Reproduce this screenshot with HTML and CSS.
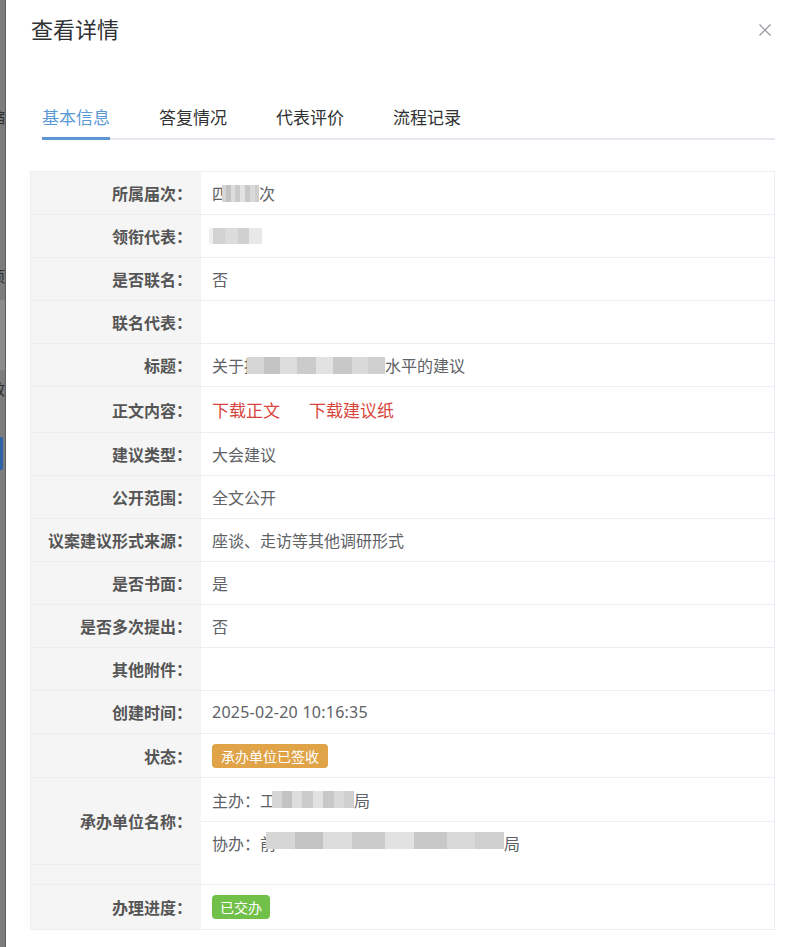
FILE: index.html
```html
<!DOCTYPE html>
<html lang="zh-CN">
<head>
<meta charset="utf-8">
<title>查看详情</title>
<link rel="stylesheet" href="styles.css">
</head>
<body>
<div class="backdrop">
  <span class="bg-glyph g1">缩</span>
  <span class="bg-glyph g2">项</span>
  <span class="bg-glyph g3">效</span>
  <span class="bg-glyph g4">效</span>
  <span class="bg-band b1"></span>
  <span class="bg-btn"></span>
</div>
<div class="modal">
  <div class="modal-header">
    <div class="modal-title">查看详情</div>
    <svg class="close" viewBox="0 0 12 12" width="12" height="12"><path d="M0.5 0.5 L11.5 11.5 M11.5 0.5 L0.5 11.5" stroke="#909399" stroke-width="1.2" fill="none"/></svg>
  </div>
  <div class="tabs">
    <div class="tab active">基本信息</div>
    <div class="tab">答复情况</div>
    <div class="tab">代表评价</div>
    <div class="tab">流程记录</div>
  </div>
  <div class="table">
    <div class="row"><div class="label">所属届次：</div><div class="value">四<span class="mosaic m-a"></span>次</div></div>
    <div class="row"><div class="label">领衔代表：</div><div class="value"><span class="mosaic m-b"></span></div></div>
    <div class="row"><div class="label">是否联名：</div><div class="value">否</div></div>
    <div class="row"><div class="label">联名代表：</div><div class="value"></div></div>
    <div class="row"><div class="label">标题：</div><div class="value">关于提<span class="mosaic m-c"></span>水平的建议</div></div>
    <div class="row row-links"><div class="label">正文内容：</div><div class="value"><a class="link">下载正文</a><a class="link">下载建议纸</a></div></div>
    <div class="row"><div class="label">建议类型：</div><div class="value">大会建议</div></div>
    <div class="row"><div class="label">公开范围：</div><div class="value">全文公开</div></div>
    <div class="row"><div class="label">议案建议形式来源：</div><div class="value">座谈、走访等其他调研形式</div></div>
    <div class="row"><div class="label">是否书面：</div><div class="value">是</div></div>
    <div class="row"><div class="label">是否多次提出：</div><div class="value">否</div></div>
    <div class="row"><div class="label">其他附件：</div><div class="value"></div></div>
    <div class="row"><div class="label">创建时间：</div><div class="value num">2025-02-20 10:16:35</div></div>
    <div class="row row-status"><div class="label">状态：</div><div class="value"><span class="tag tag-warn">承办单位已签收</span></div></div>
    <div class="row row-units">
      <div class="label-col">
        <div class="label label-main">承办单位名称：</div>
        <div class="label-spacer"></div>
      </div>
      <div class="value-col">
        <div class="value sub-main">主办：工<span class="mosaic m-d"></span>局</div>
        <div class="value sub-assist">协办：前<span class="mosaic m-e"></span>局</div>
      </div>
    </div>
    <div class="row row-progress"><div class="label">办理进度：</div><div class="value"><span class="tag tag-ok">已交办</span></div></div>
  </div>
</div>
</body>
</html>
```
FILE: styles.css
```css
html, body {
  margin: 0;
  padding: 0;
}
body {
  display: flex;
  height: 947px;
  overflow: hidden;
  background: #ffffff;
  font-family: "Noto Sans", "Noto Sans CJK SC", sans-serif;
  color: #606266;
}
.backdrop {
  position: relative;
  width: 5px;
  flex: 0 0 5px;
  background: #7d7d7d;
  border-right: 1px solid #5e5e5e;
  overflow: hidden;
}
.bg-glyph {
  position: absolute;
  left: -10px;
  font-size: 15px;
  line-height: 20px;
  color: #2e2e2e;
}
.g1 { top: 107px; }
.g2 { top: 266px; }
.g3 { top: 323px; }
.g4 { top: 379px; }
.bg-band {
  position: absolute;
  left: 0;
  right: 0;
  background: #8c8c8c;
}
.b1 { top: 300px; height: 70px; }
.bg-btn {
  position: absolute;
  left: 0;
  width: 3px;
  top: 437px;
  height: 33px;
  background: #2f63a8;
  border-radius: 0 2px 2px 0;
}
.modal {
  flex: 1;
  background: #ffffff;
  padding: 14px 25px 0 24px;
  box-sizing: border-box;
}
.modal-header {
  display: flex;
  align-items: center;
  justify-content: space-between;
  height: 28px;
}
.modal-title {
  font-size: 22px;
  line-height: 28px;
  color: #303133;
  font-family: "Noto Sans CJK SC", sans-serif;
  padding-left: 1px;
}
.close {
  margin-right: 4px;
  margin-top: 4px;
}
.tabs {
  display: flex;
  margin: 55px 0 0 12px;
  border-bottom: 2px solid #e4e7ed;
  height: 41px;
}
.tab {
  font-family: "Noto Sans CJK SC", sans-serif;
  font-size: 17px;
  line-height: 40px;
  height: 41px;
  padding: 0 24.5px;
  color: #303133;
  box-sizing: border-box;
}
.tab:first-child {
  padding-left: 0;
}
.tab.active {
  color: #5a98d6;
  position: relative;
}
.tab.active::after {
  content: "";
  position: absolute;
  left: 0;
  right: 24.5px;
  bottom: -2px;
  height: 3px;
  background: #5b95d3;
}
.table {
  margin-top: 31px;
  border: 1px solid #ebeef5;
  border-bottom: none;
}
.row {
  display: grid;
  grid-template-columns: 170px 1fr;
  border-bottom: 1px solid #ebeef5;
}
.label {
  background: #f5f5f5;
  font-family: "Noto Sans CJK SC", sans-serif;
  font-weight: bold;
  font-size: 16px;
  color: #555555;
  text-align: right;
  display: flex;
  align-items: center;
  justify-content: flex-end;
  padding-right: 9px;
  min-height: 42px;
}
.value {
  display: flex;
  align-items: center;
  padding-left: 11px;
  font-size: 16px;
  line-height: 22px;
  min-height: 42px;
  color: #606266;
  font-family: "Noto Sans CJK SC", sans-serif;
}
.value.num {
  font-family: "Noto Sans", "Noto Sans CJK SC", sans-serif;
  font-size: 16px;
  letter-spacing: 0.25px;
}
.row-links .label, .row-links .value { min-height: 45px; }
.row-status .label, .row-status .value { min-height: 43px; }
.row-progress .label, .row-progress .value { min-height: 44px; }
.link {
  color: #d8453b;
  font-size: 17px;
  margin-right: 29px;
  cursor: pointer;
}
.tag {
  display: inline-flex;
  align-items: center;
  height: 24px;
  padding: 0 9px;
  border-radius: 4px;
  color: #ffffff;
  font-size: 14px;
  line-height: 24px;
}
.tag-warn { background: #e0a348; }
.tag-ok { background: #71c04a; padding: 0 8px; }
.row-units {
  display: grid;
  grid-template-columns: 170px 1fr;
}
.label-col {
  display: flex;
  flex-direction: column;
  background: #f5f5f5;
}
.label-main {
  height: 86px;
  border-bottom: 1px solid #ebeef5;
  box-sizing: content-box;
}
.label-spacer {
  flex: 1;
}
.value-col {
  display: flex;
  flex-direction: column;
}
.sub-main {
  min-height: 43px;
  border-bottom: 1px solid #ebeef5;
}
.sub-assist {
  min-height: 52px;
  align-items: flex-start;
  padding-top: 10px;
}
.mosaic {
  display: inline-block;
  height: 17px;
  vertical-align: middle;
  background:
    linear-gradient(90deg, #d6d6d6 0 12%, #c3c3c3 12% 24%, #dddddd 24% 36%, #cbcbcb 36% 50%, #e2e2e2 50% 62%, #c8c8c8 62% 76%, #d9d9d9 76% 88%, #cfcfcf 88% 100%);
}
.m-a { width: 37px; margin-left: -6px; }
.m-b { width: 53px; height: 16px; margin-left: -3px; background: linear-gradient(90deg, #eeeeee 0 8%, #d2d2d2 8% 30%, #dcdcdc 30% 55%, #d0d0d0 55% 75%, #e8e8e8 75% 100%); }
.m-c { width: 138px; margin-left: -13px; }
.m-d { width: 82px; margin-left: -4px; }
.m-e { width: 238px; margin-left: -10px; }
```
